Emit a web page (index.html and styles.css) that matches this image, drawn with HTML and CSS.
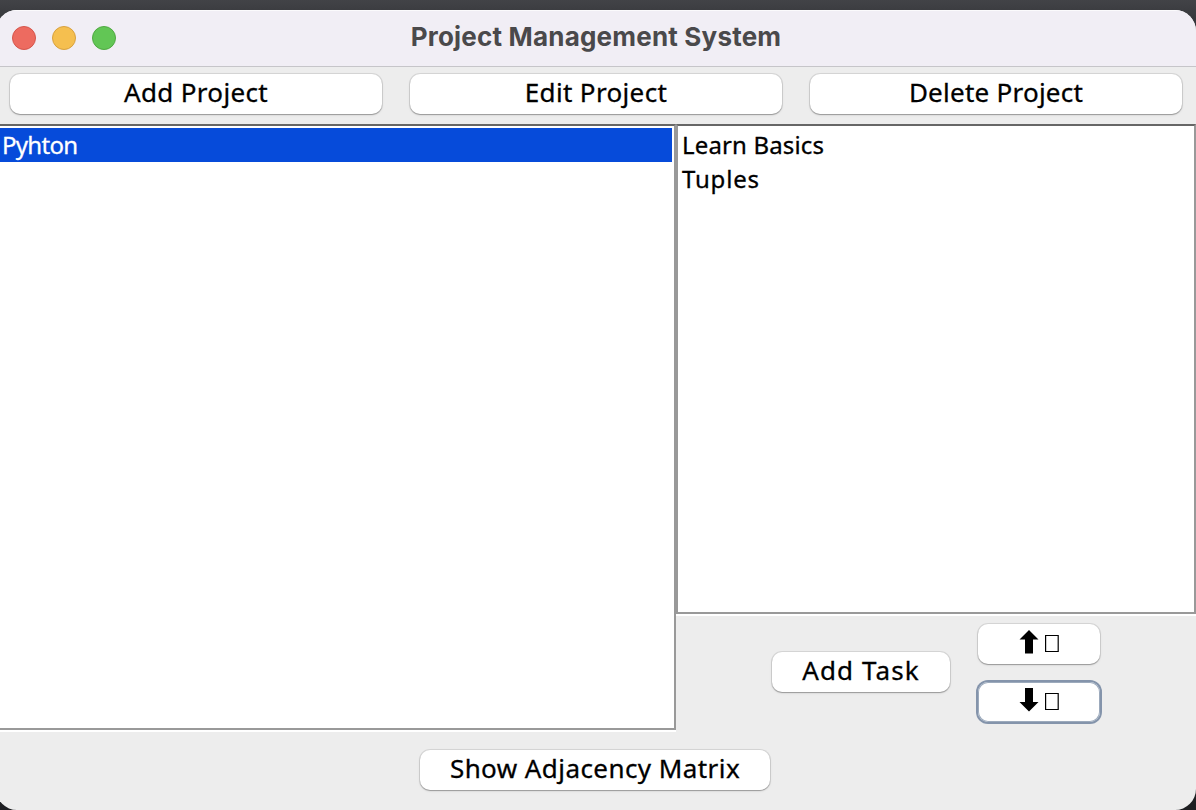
FILE: index.html
```html
<!DOCTYPE html>
<html lang="en">
<head>
<meta charset="utf-8">
<title>Project Management System</title>
<link rel="stylesheet" href="styles.css">
</head>
<body>
<div class="window">
  <header class="titlebar">
    <div class="lights"><i class="light close"></i><i class="light minimize"></i><i class="light expand"></i></div>
    <h1 class="title">Project Management System</h1>
  </header>
  <nav class="toolbar">
    <button class="btn"><span class="t-add">Add Project</span></button>
    <button class="btn"><span class="t-edit">Edit Project</span></button>
    <button class="btn"><span class="t-delete">Delete Project</span></button>
  </nav>
  <main class="content">
    <ul class="list projects">
      <li class="item selected"><span class="t-python">Pyhton</span></li>
    </ul>
    <section class="side">
      <ul class="list tasks">
        <li class="item"><span class="t-learn">Learn Basics</span></li>
        <li class="item"><span class="t-tuples">Tuples</span></li>
      </ul>
      <div class="actions">
        <button class="btn add-task"><span class="t-task">Add Task</span></button>
        <div class="movers">
          <button class="btn move" aria-label="Move up">
            <svg width="42" height="26" viewBox="0 0 42 26"><path d="M11 1L20.500 10.500H15V24.500H7V10.500H1.500Z"/><path class="box" d="M27.600 6.500H40.200V22.500H27.600Z"/></svg>
          </button>
          <button class="btn move focused" aria-label="Move down">
            <svg width="42" height="26" viewBox="0 0 42 26"><path d="M11 24.500L20.500 15H15V1H7V15H1.500Z"/><path class="box" d="M27.600 6.500H40.200V22.500H27.600Z"/></svg>
          </button>
        </div>
      </div>
    </section>
  </main>
  <footer class="footer">
    <button class="btn matrix"><span class="t-matrix">Show Adjacency Matrix</span></button>
  </footer>
</div>
</body>
</html>
```
FILE: styles.css
```css
* { box-sizing: border-box; }
body {
  margin: 0;
  height: 810px;
  padding-top: 10px;
  overflow: hidden;
  background: linear-gradient(#424347 0, #3c3d41 10px, #1e1f22 60px, #1e1f22 100%);
  font-family: "Noto Sans", "Open Sans", sans-serif;
  color: #000;
}
.window {
  width: 1200px;
  height: 800px;
  margin-left: -4px;
  border-radius: 21px;
  overflow: hidden;
  background: #ededed;
  display: flex;
  flex-direction: column;
}
.titlebar {
  height: 57px;
  flex: none;
  display: grid;
  grid-template-columns: 400px 400px 400px;
  align-items: center;
  padding-bottom: 2px;
  background: #f1eef5;
  border-top: 1px solid #fbfafc;
  border-bottom: 1px solid #c6c5c9;
}
.lights { display: flex; gap: 16px; padding-left: 16px; }
.light { width: 24px; height: 24px; border-radius: 50%; border: 1px solid; }
.close { background: #ed6b60; border-color: #d5564c; }
.minimize { background: #f5bf4f; border-color: #d8a13f; }
.expand { background: #62c655; border-color: #50a942; }
.title {
  margin: 0;
  padding-bottom: 2px;
  text-align: center;
  font: bold 26px/30px Inter, sans-serif;
  letter-spacing: .2px;
  color: #4a494b;
}
.toolbar {
  height: 57px;
  flex: none;
  display: flex;
  align-items: flex-start;
  gap: 28px;
  padding: 7px 14px 0;
}
.toolbar .btn { width: 372px; }
.btn {
  height: 40px;
  flex: none;
  display: flex;
  align-items: center;
  justify-content: center;
  margin: 0;
  padding: 0 0 4px;
  border: 0;
  border-radius: 10px;
  background: #fff;
  box-shadow: 0 0 0 1px rgba(0, 0, 0, .09), 0 1px 1px rgba(0, 0, 0, .23), 0 1px 3px rgba(0, 0, 0, .1);
  color: #000;
  font: 26px/36px "Noto Sans", "Open Sans", sans-serif;
  white-space: nowrap;
}
.btn span, .item span { -webkit-text-stroke: .3px currentColor; }
.t-add, .t-edit { letter-spacing: .35px; }
.t-delete { letter-spacing: .25px; }
.t-task { letter-spacing: 1.1px; }
.t-matrix { letter-spacing: .43px; }
.t-python { letter-spacing: -.7px; }
.t-learn { letter-spacing: .15px; }
.t-tuples { letter-spacing: .8px; }
.content {
  height: 608px;
  flex: none;
  display: grid;
  grid-template-columns: 680px 520px;
  align-items: start;
}
.list {
  margin: 0;
  list-style: none;
  border: 2px solid #999;
  border-top-color: #666;
  background: #fff;
  box-shadow: 0 2px 0 #fff;
}
.projects { height: 606px; padding: 2px 2px 2px 0; border-left: 0; }
.tasks { height: 490px; padding: 2px; }
.item {
  height: 34px;
  padding-left: 2px;
  font-size: 24px;
  line-height: 34px;
  white-space: nowrap;
}
.selected { padding-left: 6px; background: #064bda; color: #fff; }
.actions { display: flex; gap: 28px; padding: 10px 0 0 96px; }
.add-task { width: 178px; margin-top: 28px; }
.movers { display: flex; flex-direction: column; gap: 18px; }
.move { width: 122px; }
.move svg { display: block; }
.box { fill: none; stroke: #000; stroke-width: 1.200; }
.focused { box-shadow: 0 0 0 2px #8494ab, inset 0 0 0 1px #9caabc; }
.footer { flex: 1; padding: 18px 0 0 424px; }
.matrix { width: 350px; }
```
